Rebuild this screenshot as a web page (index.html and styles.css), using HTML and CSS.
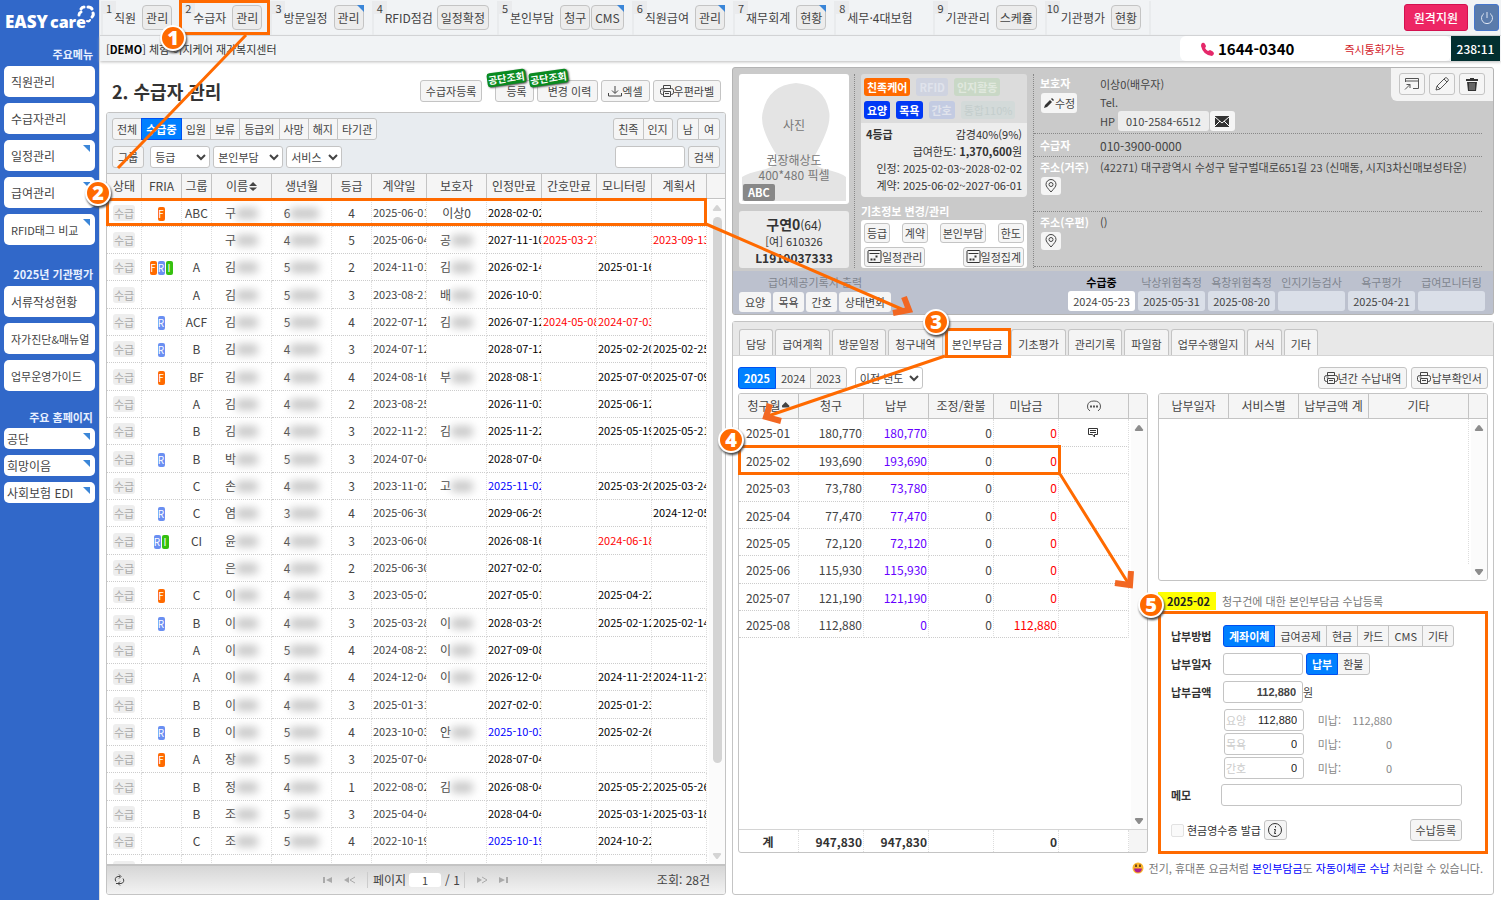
FILE: index.html
```html
<!DOCTYPE html>
<html lang="ko">

<head>
    <meta charset="UTF-8">
    <meta name="viewport" content="width=device-width, initial-scale=1.0">
    <title>EASYcare - 수급자 관리</title>
    <link rel="stylesheet" href="styles.css">
</head>

<body>
    <!-- shared icons -->
    <svg class="defs" aria-hidden="true">
        <symbol id="i-print" viewBox="0 0 14 14"><g fill="none" stroke="#444"><path d="M3.5 4.5v-3h7v3M3.5 10.5h-1a2 2 0 0 1-2-2v-2a2 2 0 0 1 2-2h9a2 2 0 0 1 2 2v2a2 2 0 0 1-2 2h-1"/><path d="M3.5 7.5h7v5h-7zM2.5 6h2M5 9.500h4"/></g></symbol>
        <symbol id="i-pin" viewBox="0 0 12 14"><g fill="none" stroke="#444"><path d="M6 13C3 9.500 1 7.500 1 5.500a5 5 0 0 1 10 0c0 2-2 4-5 7.500z"/><circle cx="6" cy="5.500" r="2"/></g></symbol>
        <symbol id="i-cal" viewBox="0 0 14 14"><g fill="none" stroke="#333"><rect x=".5" y=".5" width="13" height="12" rx="1"/><path d="M2 3.500h10"/><path d="M8 6.500h3M3 9.500h2M6 9.500h2" stroke-width="2" stroke-dasharray="2 1"/></g></symbol>
        <symbol id="i-tri" viewBox="0 0 10 8"><path d="M4 1.500q1-1 2 0l3 4q.7 1.500-1 1.500h-6q-1.700 0-1-1.500z" fill="currentColor"/></symbol>
    </svg>

    <div class="app">
        <aside class="sidebar">
            <a class="logo" href="#" aria-label="EASYcare">
                <svg width="92" height="32" viewBox="0 0 92 32">
                    <text x="1" y="28" class="logo-text" font-size="17">EASY</text>
                    <text x="46" y="28" class="logo-text" font-size="16">care</text>
                    <g fill="none" stroke="#fff" stroke-width="3" stroke-linecap="round">
                        <path d="M75 15q0-2 2-3"/><path d="M77 9q1-2 3-2"/><path d="M84 7q3 0 4 2"/>
                        <path d="M89 13q1 2-1 4"/><path d="M86 20q-1 2-3 1" stroke-width="2"/>
                    </g>
                </svg>
            </a>
            <h2>주요메뉴</h2>
            <a class="menu" href="#">직원관리</a>
            <a class="menu" href="#">수급자관리</a>
            <a class="menu corner" href="#">일정관리</a>
            <a class="menu corner" href="#">급여관리</a>
            <a class="menu tight corner" href="#">RFID태그 비교</a>
            <h2 class="second">2025년 기관평가</h2>
            <a class="menu" href="#">서류작성현황</a>
            <a class="menu tight" href="#">자가진단&amp;매뉴얼</a>
            <a class="menu tight" href="#">업무운영가이드</a>
            <h2 class="third">주요 홈페이지</h2>
            <a class="menu small corner" href="#">공단</a>
            <a class="menu small corner" href="#">희망이음</a>
            <a class="menu small corner" href="#">사회보험 EDI</a>
        </aside>

        <div class="page">
            <nav class="topnav">
                <div class="nav-item"><i>1</i><a href="#">직원</a><button>관리</button></div>
                <div class="nav-item"><i>2</i><a href="#">수급자</a><button>관리</button></div>
                <div class="nav-item"><i>3</i><a href="#">방문일정</a><button class="corner">관리</button></div>
                <div class="nav-item near"><i>4</i><a href="#">RFID점검</a><button>일정확정</button></div>
                <div class="nav-item"><i>5</i><a href="#">본인부담</a><div class="pair"><button>청구</button><button class="corner">CMS</button></div></div>
                <div class="nav-item"><i>6</i><a href="#">직원급여</a><button class="corner">관리</button></div>
                <div class="nav-item"><i>7</i><a href="#">재무회계</a><button class="corner">현황</button></div>
                <div class="nav-item wide"><i>8</i><a href="#">세무·4대보험</a></div>
                <div class="nav-item"><i>9</i><a href="#">기관관리</a><button>스케쥴</button></div>
                <div class="nav-item two-digit"><i>10</i><a href="#">기관평가</a><button>현황</button></div>
                <button class="remote">원격지원</button>
                <button class="power" aria-label="로그아웃">
                    <svg width="14" height="14" viewBox="0 0 14 14" fill="none" stroke="#dfe6f2"><path d="M7 1v6M4 2.500a5.500 5.500 0 1 0 6 0"/></svg>
                </button>
            </nav>
            <div class="infobar">
                <span>[<b>DEMO</b>] 체험 이지케어 재가복지센터</span>
                <div class="hotline">
                    <svg width="14" height="14" viewBox="0 0 14 14"><path d="M1 1q2-1 3 1l1 2q0 1-1 2 1 2 3 3l2-1q3 1 4 3 0 2-2 3Q2 13 0 4 0 2 1 1z" fill="#e5286a"/></svg>
                    <b>1644-0340</b>
                    <span>즉시통화가능</span>
                </div>
                <div class="timer">238:11</div>
            </div>

            <main>
                <section class="list">
                    <header>
                        <h1>2. 수급자 관리</h1>
                        <button class="btn reg">수급자등록</button>
                        <div class="tagged"><em>공단조회</em><button class="btn">등록</button></div>
                        <div class="tagged"><em>공단조회</em><button class="btn">변경 이력</button></div>
                        <button class="btn"><svg width="14" height="12" viewBox="0 0 14 12" fill="none" stroke="#444"><path d="M7 1v7M4 5.500l3 3 3-3M.5 8v3h13V8"/></svg>엑셀</button>
                        <button class="btn"><svg width="14" height="14"><use href="#i-print"/></svg>우편라벨</button>
                    </header>
                    <div class="box client-box">
                        <div class="toolbar">
                            <div class="line">
                                <div class="group">
                                    <button class="btn">전체</button><button class="btn on">수급중</button><button class="btn">입원</button><button class="btn">보류</button><button class="btn">등급외</button><button class="btn">사망</button><button class="btn">해지</button><button class="btn">타기관</button>
                                </div>
                                <div class="group push"><button class="btn">친족</button><button class="btn">인지</button></div>
                                <div class="group sex"><button class="btn">남</button><button class="btn">여</button></div>
                            </div>
                            <div class="line">
                                <button class="btn group-btn">그룹</button>
                                <select class="s-grade" aria-label="등급"><option>등급</option></select>
                                <select class="s-pay" aria-label="본인부담"><option>본인부담</option></select>
                                <select class="s-svc" aria-label="서비스"><option>서비스</option></select>
                                <input class="field push search" type="text" aria-label="검색어">
                                <button class="btn">검색</button>
                            </div>
                        </div>
                        <div class="scroll">
                            <table class="grid clients">
                                <colgroup>
                                    <col class="w35"><col class="w40"><col class="w30"><col class="w60"><col class="w60"><col class="w40"><col class="w55"><col class="w60"><col class="w55"><col class="w55"><col class="w55"><col class="w55"><col>
                                </colgroup>
                                <thead>
                                    <tr><th>상태</th><th>FRIA</th><th>그룹</th><th>이름<span class="sort"></span></th><th>생년월</th><th>등급</th><th>계약일</th><th>보호자</th><th>인정만료</th><th>간호만료</th><th>모니터링</th><th>계획서</th><th></th></tr>
                                </thead>
                                <tbody id="clients"></tbody>
                            </table>
                            <div class="bar light"><svg width="10" height="8"><use href="#i-tri"/></svg><span class="thumb"></span><svg class="down" width="10" height="8"><use href="#i-tri"/></svg></div>
                        </div>
                        <footer>
                            <svg width="11" height="12" viewBox="0 0 11 12" fill="none" stroke="#444"><path d="M6 2.500H4a3 3 0 0 0-2 5M2 9.500h3M5 .5l2 2-2 2M5 9.500h2a3 3 0 0 0 2-5M6 7.500l-2 2 2 2"/></svg>
                            <div class="pager">
                                <svg width="10" height="8" viewBox="0 0 10 8" fill="#aaa"><path d="M0 1h2v6H0zM9 1v6L3 4z"/></svg>
                                <svg width="12" height="8" viewBox="0 0 12 8" fill="#aaa"><path d="M5 1v6L0 4z"/><path d="M11 1L6 4l5 3" fill="none" stroke="#aaa"/></svg>
                                <label for="pageno">페이지</label>
                                <input id="pageno" type="text" value="1">
                                <span class="total">/ 1</span>
                                <svg width="12" height="8" viewBox="0 0 12 8" fill="#aaa"><path d="M1 1v6l5-3z"/><path d="M6 1l5 3-5 3" fill="none" stroke="#aaa"/></svg>
                                <svg width="10" height="8" viewBox="0 0 10 8" fill="#aaa"><path d="M7 1h2v6H7zM0 1v6l6-3z"/></svg>
                            </div>
                            <span class="count">조회: 28건</span>
                        </footer>
                    </div>
                </section>

                <div class="right">
                    <section class="detail">
                        <div class="detail-top">
                            <div class="who">
                                <div class="photo">
                                    <svg viewBox="0 0 104 124" width="104" height="124"><path d="M0 124V100q5-4 24-8 13-4 12-12-8-12-12-22-6-14-3-24Q27 8 54 6q28 2 33 28 2 10-4 24-4 10-11 22-2 8 10 12 18 4 22 8v24z" fill="#e4e4e4"/></svg>
                                    <span>사진</span>
                                    <p>권장해상도<br>400*480 픽셀</p>
                                    <b>ABC</b>
                                </div>
                                <div class="name">
                                    <p><strong>구연0</strong>(64)</p>
                                    <p class="id">[여] 610326</p>
                                    <p><b>L1910037333</b></p>
                                </div>
                            </div>
                            <div class="grade">
                                <div class="chips">
                                    <span class="chip orange">친족케어</span><span class="chip pale">RFID</span><span class="chip green">인지활동</span>
                                    <span class="chip blue">요양</span><span class="chip blue">목욕</span><span class="chip pale2">간호</span><span class="chip pale3">통합110%</span>
                                </div>
                                <div class="limits">
                                    <p class="split"><b>4등급</b><span>감경40%(9%)</span></p>
                                    <p>급여한도: <b>1,370,600</b>원</p>
                                    <p>인정: 2025-02-03~2028-02-02</p>
                                    <p>계약: 2025-06-02~2027-06-01</p>
                                </div>
                                <h3>기초정보 변경/관리</h3>
                                <div class="basic">
                                    <button class="btn">등급</button><button class="btn">계약</button><button class="btn">본인부담</button><button class="btn">한도</button>
                                    <button class="btn"><svg width="15" height="14"><use href="#i-cal"/></svg>일정관리</button><button class="btn"><svg width="15" height="14"><use href="#i-cal"/></svg>일정집계</button>
                                </div>
                            </div>
                            <div class="contact">
                                <div class="tools">
                                    <button class="btn" aria-label="새 창"><svg width="16" height="14" viewBox="0 0 16 14" fill="none" stroke="#555"><path d="M1.500 5V1.500h13v10H9M1.500 4h13M1 12.500l5-5M2.500 7.500H6V11"/></svg></button>
                                    <button class="btn" aria-label="수정"><svg width="16" height="16" viewBox="0 0 16 16" fill="none" stroke="#555"><path d="M2 14l1-4 8-8q1-1 2.500.5T14 5l-8 8zM3 10l3 3M10 3l3 3"/></svg></button>
                                    <button class="btn" aria-label="삭제"><svg width="14" height="15" viewBox="0 0 14 15"><path d="M1 2h4V1h4v1h4v2H1zM2 5h10l-1 9H3z" fill="#333"/><path d="M5 6v7M7 6v7M9 6v7" stroke="#999"/></svg></button>
                                </div>
                                <div class="row guardian">
                                    <div><strong>보호자</strong><button class="flat"><svg width="12" height="12" viewBox="0 0 12 12"><path d="M1 11l1-3 5-5 2 2-5 5zM8 2l1-1 2 2-1 1z" fill="#333"/></svg>수정</button></div>
                                    <div class="lines"><p>이상0(배우자)</p><p>Tel.</p><p class="hp">HP <span>010-2584-6512</span><button class="flat mail" aria-label="문자"><svg width="14" height="11" viewBox="0 0 14 11"><path d="M0 0h14v11H0z" fill="#333"/><path d="M0 1l7 6 7-6M0 10l5-5M14 10L9 5" fill="none" stroke="#fff"/></svg></button></p></div>
                                </div>
                                <div class="row self"><strong>수급자</strong><p>010-3900-0000</p></div>
                                <div class="row addr"><div><strong>주소(거주)</strong><button class="flat pin" aria-label="지도"><svg width="12" height="14"><use href="#i-pin"/></svg></button></div><p>(42271) 대구광역시 수성구 달구벌대로651길 23 (신매동, 시지3차신매보성타운)</p></div>
                                <div class="row addr"><div><strong>주소(우편)</strong><button class="flat pin" aria-label="지도"><svg width="12" height="14"><use href="#i-pin"/></svg></button></div><p>()</p></div>
                            </div>
                        </div>
                        <div class="strip">
                            <div class="record">
                                <p>급여제공기록지 출력</p>
                                <button class="flat">요양</button><button class="flat">목욕</button><button class="flat">간호</button><button class="flat">상태변화</button>
                            </div>
                            <div class="dates">
                                <div class="now"><p>수급중</p><span>2024-05-23</span></div>
                                <div><p>낙상위험측정</p><span>2025-05-31</span></div>
                                <div><p>욕창위험측정</p><span>2025-08-20</span></div>
                                <div><p>인지기능검사</p><span></span></div>
                                <div><p>욕구평가</p><span>2025-04-21</span></div>
                                <div><p>급여모니터링</p><span></span></div>
                            </div>
                        </div>
                    </section>

                    <section class="work">
                        <div class="tabs">
                            <button>담당</button><button>급여계획</button><button>방문일정</button><button>청구내역</button><button class="on">본인부담금</button><button>기초평가</button><button>관리기록</button><button>파일함</button><button>업무수행일지</button><button>서식</button><button>기타</button>
                        </div>
                        <div class="work-bar">
                            <div class="group years"><button class="btn on">2025</button><button class="btn">2024</button><button class="btn">2023</button></div>
                            <select class="s-year" aria-label="이전 년도"><option>이전 년도</option></select>
                            <button class="btn push"><svg width="14" height="14"><use href="#i-print"/></svg>년간 수납내역</button>
                            <button class="btn"><svg width="14" height="14"><use href="#i-print"/></svg>납부확인서</button>
                        </div>
                        <div class="work-body">
                            <div class="box bill-box">
                                <table class="grid bills">
                                    <colgroup><col class="w60"><col class="w65"><col class="w65"><col class="w65"><col class="w65"><col class="w70"><col></colgroup>
                                    <thead>
                                        <tr><th>청구월<span class="sort up"></span></th><th>청구</th><th>납부</th><th>조정/환불</th><th>미납금</th><th><svg width="16" height="12" viewBox="0 0 16 12" fill="none" stroke="#555"><path d="M4 11Q1 9 1.500 6 2 1 8 1t6.500 5q.5 3-2.500 5"/><path d="M4 6.500h8" stroke-width="2" stroke-dasharray="2 1"/></svg></th><th></th></tr>
                                    </thead>
                                    <tbody id="bills"></tbody>
                                </table>
                                <div class="bar"><svg width="10" height="8"><use href="#i-tri"/></svg><svg class="down" width="10" height="8"><use href="#i-tri"/></svg></div>
                                <table class="grid bills sum">
                                    <colgroup><col class="w60"><col class="w65"><col class="w65"><col class="w65"><col class="w65"><col class="w70"><col></colgroup>
                                    <tr><td>계</td><td>947,830</td><td>947,830</td><td></td><td>0</td><td></td><td></td></tr>
                                </table>
                            </div>
                            <div class="pay">
                                <div class="box pay-box">
                                    <table class="grid pays">
                                        <colgroup><col class="w70"><col class="w70"><col class="w70"><col class="w100"><col></colgroup>
                                        <thead><tr><th>납부일자</th><th>서비스별</th><th>납부금액 계</th><th>기타</th><th></th></tr></thead>
                                        <tbody><tr><td></td><td></td><td></td><td></td><td></td></tr></tbody>
                                    </table>
                                    <div class="bar"><svg width="10" height="8"><use href="#i-tri"/></svg><svg class="down" width="10" height="8"><use href="#i-tri"/></svg></div>
                                </div>
                                <p class="caption"><mark>2025-02</mark>청구건에 대한 본인부담금 수납등록</p>
                                <form class="pay-form">
                                    <div class="f-row"><b>납부방법</b><div class="group"><button type="button" class="btn on">계좌이체</button><button type="button" class="btn">급여공제</button><button type="button" class="btn">현금</button><button type="button" class="btn">카드</button><button type="button" class="btn">CMS</button><button type="button" class="btn">기타</button></div></div>
                                    <div class="f-row"><label for="paydate">납부일자</label><input class="field" id="paydate" type="text"><div class="group"><button type="button" class="btn on">납부</button><button type="button" class="btn">환불</button></div></div>
                                    <div class="f-row"><label for="amount">납부금액</label><input class="field num" id="amount" type="text" value="112,880"><span>원</span></div>
                                    <div class="parts">
                                        <div><div class="field"><label for="p1">요양</label><input id="p1" type="text" value="112,880"></div><span>미납:</span><span>112,880</span></div>
                                        <div><div class="field"><label for="p2">목욕</label><input id="p2" type="text" value="0"></div><span>미납:</span><span>0</span></div>
                                        <div><div class="field"><label for="p3">간호</label><input id="p3" type="text" value="0"></div><span>미납:</span><span>0</span></div>
                                    </div>
                                    <div class="f-row memo"><label for="memo">메모</label><input class="field" id="memo" type="text"></div>
                                    <div class="f-row last"><input type="checkbox" id="receipt"><label for="receipt">현금영수증 발급</label><button type="button" class="btn info" aria-label="안내"><svg width="16" height="16" viewBox="0 0 16 16" fill="none" stroke="#333"><circle cx="8" cy="8" r="6.500"/><path d="M8.500 4v1.500M7 7.500h1.500L7.500 11.500H9"/></svg></button><button type="button" class="btn push">수납등록</button></div>
                                </form>
                            </div>
                        </div>
                        <p class="note"><svg width="12" height="12" viewBox="0 0 12 12"><circle cx="6" cy="6" r="5.500" fill="#fbb52c"/><path d="M2 6.500h8q-.5 4-4 4t-4-4z" fill="#b0208c"/><path d="M4 2.500v2.500M8 2.500v2.500" stroke="#4a2a10" stroke-width="1.500"/></svg>전기, 휴대폰 요금처럼 <a href="#">본인부담금</a>도 <a href="#">자동이체로 수납</a> 처리할 수 있습니다.</p>
                    </section>
                </div>
            </main>
        </div>
    </div>

    <!-- step guide drawn over the page -->
    <svg class="guide" width="1500" height="900" viewBox="0 0 1500 900">
        <g fill="none" stroke="#ff6a00" stroke-width="3">
            <path d="M246 35L118 168M706 224L906 311M945 356L768 416M1060 474L1130 586"/>
            <rect x="180.500" y="1.500" width="88" height="32"/>
            <rect x="107.500" y="199.500" width="598" height="25"/>
            <rect x="739.500" y="446.500" width="320" height="27"/>
            <rect x="946.500" y="329.500" width="63" height="27"/>
            <rect x="1159.500" y="612.500" width="327" height="240"/>
        </g>
        <g fill="none" stroke="#f26722" stroke-width="6">
            <path d="M904 297l5 13-16 3M770 404l-4 13 15 4M1131 571l-1 14-15-2"/>
        </g>
        <g class="steps">
            <g transform="translate(173 38)"><circle r="12"/><text y="7">1</text></g>
            <g transform="translate(98 193)"><circle r="12"/><text y="7">2</text></g>
            <g transform="translate(936 322)"><circle r="12"/><text y="7">3</text></g>
            <g transform="translate(731 440)"><circle r="12"/><text y="7">4</text></g>
            <g transform="translate(1151 605)"><circle r="12"/><text y="7">5</text></g>
        </g>
    </svg>

    <script src="script.js"></script>
</body>

</html>
```
FILE: styles.css
```css
* {
    box-sizing: border-box;
}

body {
    margin: 0;
    font-family: "Noto Sans CJK KR", sans-serif;
    font-size: 11px;
    line-height: 16px;
    color: #444;
    background: #fff;
}

h1, h2, h3, p {
    margin: 0;
}

a {
    color: inherit;
    text-decoration: none;
}

button, input, select {
    font: inherit;
    color: inherit;
    margin: 0;
}

button {
    display: flex;
    align-items: center;
    justify-content: center;
    white-space: nowrap;
}

.defs {
    position: absolute;
    width: 0;
    height: 0;
}

.app {
    display: flex;
    height: 100vh;
}

.push {
    margin-left: auto;
}

/* sidebar */
.sidebar {
    width: 99px;
    flex: none;
    padding: 0 4px;
    background: #3168c9;
}

.logo {
    display: block;
    height: 46px;
}

.logo-text {
    font-family: "Open Sans", sans-serif;
    font-weight: 800;
    fill: #fff;
}

.sidebar h2 {
    margin-bottom: 4px;
    padding-right: 2px;
    text-align: right;
    font-size: 11px;
    line-height: 16px;
    color: #e8f0ff;
}

.sidebar h2.second {
    margin-top: 21px;
}

.sidebar h2.third {
    margin-top: 18px;
    margin-bottom: 3px;
}

.menu {
    position: relative;
    display: block;
    height: 31px;
    margin-bottom: 6px;
    padding-left: 7px;
    line-height: 32px;
    font-size: 12px;
    white-space: nowrap;
    background: #fff;
    border-radius: 5px;
}

.menu.tight {
    font-size: 11px;
}

.menu.small {
    height: 21px;
    padding-left: 3px;
    line-height: 22px;
}

.corner::after {
    content: "";
    position: absolute;
    top: 5px;
    right: 5px;
    border-top: 7px solid #3b86d8;
    border-left: 7px solid transparent;
}

/* top bars */
.page {
    flex: 1;
    min-width: 0;
    display: flex;
    flex-direction: column;
    border-left: 1px solid #ddd;
}

.topnav {
    display: flex;
    align-items: center;
    height: 36px;
    padding: 0 2px 0 1px;
    font-size: 12px;
    background: #f1f3f5;
    border-bottom: 1px solid #d6d8da;
}

.nav-item {
    position: relative;
    display: flex;
    align-items: center;
    gap: 6px;
    height: 34px;
    padding: 0 8px 0 11px;
    border-left: 2px solid #e9ebed;
    white-space: nowrap;
}

.nav-item:last-of-type {
    border-right: 2px solid #e9ebed;
}

.nav-item.near {
    gap: 4px;
}

.nav-item.wide {
    padding-right: 20px;
}

.nav-item.two-digit {
    padding-left: 14px;
}

.nav-item i {
    position: absolute;
    left: 0;
    top: 0;
    min-width: 13px;
    height: 13px;
    padding-left: 3px;
    font-size: 11px;
    line-height: 14px;
    font-style: normal;
    background: #eaebed;
}

.nav-item.two-digit i {
    padding-left: 0;
}

.nav-item .pair {
    display: flex;
    gap: 1px;
}

.nav-item button {
    position: relative;
    height: 25px;
    padding: 0 3px;
    background: #ececec;
    border: 1px solid #c4c4c4;
    border-radius: 4px;
}

.nav-item .corner::after {
    top: -1px;
    right: -1px;
}

.remote {
    height: 27px;
    margin-left: auto;
    padding: 0 9px;
    color: #fff;
    font-weight: 500;
    background: #ed2664;
    border: 1px solid #d3114f;
    border-radius: 3px;
}

.power {
    width: 25px;
    height: 27px;
    margin-left: 6px;
    padding: 0;
    background: #5a7bab;
    border: 1px solid #4676cc;
    border-radius: 3px;
}

.infobar {
    display: flex;
    align-items: center;
    height: 25px;
    padding-left: 6px;
    background: #f1f3f5;
    box-shadow: 0 1px 3px #bbb;
    color: #333;
}

.infobar b {
    color: #000;
}

.hotline {
    display: flex;
    align-items: center;
    width: 271px;
    height: 25px;
    margin-left: auto;
    padding-left: 21px;
    background: #fff;
    border-radius: 6px;
}

.hotline b {
    margin-left: 3px;
    font-size: 15px;
}

.hotline span {
    margin-left: 50px;
    color: #d3222a;
}

.timer {
    width: 49px;
    margin-right: 1px;
    line-height: 25px;
    text-align: center;
    font-size: 12px;
    font-weight: 500;
    color: #fff;
    background: #022f30;
}

main {
    flex: 1;
    min-height: 0;
    display: flex;
    gap: 6px;
    padding: 6px 7px 5px 6px;
}

/* common controls */
.btn {
    height: 22px;
    padding: 0 5px;
    background: #f5f5f5;
    border: 1px solid #c4c4c4;
    border-radius: 3px;
}

.btn.on {
    color: #fff;
    font-weight: 700;
    background: #0080ff;
    border-color: #0050f0;
}

.group {
    display: flex;
}

.group .btn {
    padding: 0 4px;
    margin-left: -1px;
    border-radius: 0;
}

.group .btn:first-child {
    margin-left: 0;
    border-radius: 3px 0 0 3px;
}

.group .btn:last-child {
    border-radius: 0 3px 3px 0;
}

.group .btn.on {
    position: relative;
}

.flat {
    height: 20px;
    padding: 0 6px;
    background: #f5f5f5;
    border: 0;
    border-radius: 3px;
}

.field,
select {
    height: 22px;
    background: #fff;
    border: 1px solid #c4c4c4;
    border-radius: 3px;
}

.box {
    position: relative;
    display: flex;
    flex-direction: column;
    border: 1px solid #c4c4c4;
    border-radius: 3px;
    overflow: hidden;
}

/* grids */
.grid {
    width: 100%;
    table-layout: fixed;
    border-spacing: 0;
}

.w30 { width: 30px; }
.w35 { width: 35px; }
.w40 { width: 40px; }
.w55 { width: 55px; }
.w60 { width: 60px; }
.w65 { width: 65px; }
.w70 { width: 70px; }
.w100 { width: 100px; }

.grid th {
    height: 25px;
    padding: 0;
    font-size: 12px;
    font-weight: 400;
    white-space: nowrap;
    background: #f5f5f5;
    border-right: 1px solid #c4c4c4;
    border-bottom: 1px solid #c4c4c4;
}

.grid th:last-child {
    border-right: 0;
}

.grid th svg {
    display: block;
    margin: auto;
}

.grid td {
    height: 27px;
    padding: 0;
    font-size: 12px;
    text-align: center;
    white-space: nowrap;
    overflow: hidden;
    border-right: 1px dotted #ddd;
    border-bottom: 1px dotted #ccc;
}

.grid td:last-child {
    border: 0;
}

.sort {
    display: inline-block;
    width: 8px;
    height: 9px;
    margin-left: 1px;
    background: #444;
    clip-path: polygon(50% 0, 100% 45%, 0 45%, 0 60%, 100% 60%, 50% 100%, 0 60%, 0 45%);
}

.sort.up {
    clip-path: polygon(50% 0, 100% 45%, 90% 60%, 10% 60%, 0 45%);
}

.bar {
    position: absolute;
    top: 26px;
    right: 0;
    bottom: 0;
    width: 16px;
    display: flex;
    flex-direction: column;
    align-items: center;
    padding: 4px 0;
    color: #8c8c8c;
    background: #fbfbfb;
}

.bar .down {
    margin-top: auto;
    transform: rotate(180deg);
}

.bar .thumb {
    width: 9px;
    height: 546px;
    margin-top: 5px;
    background: #d4d4d4;
    border-radius: 5px;
}

.bar.light {
    color: #d4d4d4;
}

/* client list */
.list {
    width: 620px;
    flex: none;
    display: flex;
    flex-direction: column;
}

.list header {
    display: flex;
    align-items: center;
    gap: 3px;
    height: 45px;
    padding: 2px 5px 0 6px;
}

.list header .btn {
    padding: 0 6px;
}

.list h1 {
    margin-right: auto;
    font-size: 18px;
    line-height: 26px;
    color: #333;
}

.list header .reg {
    margin-right: 10px;
    padding: 0 5px;
}

.tagged {
    position: relative;
}

.list .tagged .btn {
    padding: 0 6px 0 10px;
}

.tagged em {
    position: absolute;
    left: -8px;
    top: -9px;
    padding: 0 1px;
    font-size: 10px;
    font-style: normal;
    font-weight: 700;
    line-height: 14px;
    white-space: nowrap;
    color: #fff;
    background: #0a8a20;
    border-radius: 3px;
    box-shadow: 1px 1px 2px #555;
    transform: rotate(-8deg);
}

.client-box {
    flex: 1;
    min-height: 0;
}

.toolbar {
    padding: 5px;
    background: #e8ecf0;
    border-bottom: 1px solid #c4c4c4;
}

.line {
    display: flex;
}

.line + .line {
    gap: 3px;
    margin-top: 6px;
}

.line .sex {
    margin-left: 4px;
}

.line .sex .btn,
.work-bar .years .btn {
    padding: 0 5px;
}

.line .group-btn {
    margin-right: 3px;
    padding: 0 5px;
}

.s-grade { width: 60px; }
.s-pay { width: 70px; }
.s-svc { width: 56px; }
.s-year { width: 68px; }

.search {
    width: 70px;
}

.scroll {
    position: relative;
    flex: 1;
    min-height: 0;
    overflow: hidden;
}

.clients tr:nth-child(3n + 1) td {
    height: 28px;
}

.clients .date {
    padding: 0 0 2px 1px;
    font-size: 11px;
    line-height: 14px;
    text-align: left;
    text-overflow: clip;
}

.clients .due {
    color: #000;
}

.clients .red {
    color: #f00;
}

.clients .blue {
    color: #00f;
}

.state {
    padding: 0 1px;
    font-size: 11px;
    color: #aaa;
    background: #eee;
    border-radius: 3px;
}

.fria {
    display: inline-block;
    width: 7px;
    margin-right: 1px;
    font-size: 10px;
    line-height: 14px;
    color: #fff;
    border-radius: 2px;
}

.fria.F { background: #ff6a00; }
.fria.R { background: #6a8ff2; }
.fria.I { background: #35c010; }

.mask {
    display: inline-block;
    height: 11px;
    width: 22px;
    background: #c8c8c8;
    border-radius: 4px;
    vertical-align: -1px;
    filter: blur(4px);
}

.mask.long {
    width: 29px;
}

.client-box footer {
    display: flex;
    align-items: center;
    height: 30px;
    padding: 0 15px 0 7px;
    font-size: 12px;
    background: linear-gradient(#d6d6d6, #f3f3f3);
    border-top: 2px solid #c4c4c4;
}

.pager {
    display: flex;
    align-items: center;
    gap: 11px;
    margin: 0 auto;
    padding-left: 50px;
}

.pager label {
    margin-right: -8px;
    padding-left: 5px;
    border-left: 1px solid #ccc;
}

.pager input {
    width: 32px;
    height: 14px;
    padding: 0;
    text-align: center;
    font-size: 11px;
    border: 0;
    border-radius: 3px;
}

.pager .total {
    margin-left: -7px;
    padding-right: 4px;
    border-right: 1px solid #ccc;
}

.count {
    font-size: 12px;
}

/* client detail */
.right {
    flex: 1;
    min-width: 0;
    display: flex;
    flex-direction: column;
    gap: 6px;
}

.detail {
    background: #cacaca;
    border: 1px solid #b4b4b4;
    border-radius: 3px;
    overflow: hidden;
}

.detail-top {
    display: flex;
    height: 203px;
}

.who {
    width: 122px;
    margin: 6px 0 3px;
    padding: 0 5px 0 6px;
    border-right: 1px dotted #888;
}

.photo {
    position: relative;
    width: 110px;
    height: 130px;
    padding: 3px;
    text-align: center;
    font-size: 12px;
    color: #777;
    background: #fff;
    border-radius: 3px;
}

.photo svg {
    display: block;
}

.photo span,
.photo p,
.photo b {
    position: absolute;
    left: 0;
    right: 0;
    top: 43px;
    line-height: 15px;
}

.photo p {
    top: 78px;
}

.photo b {
    left: 4px;
    right: auto;
    top: 110px;
    padding: 0 5px;
    line-height: 17px;
    font-size: 11px;
    color: #fff;
    background: #888;
    border-radius: 2px;
}

.name {
    width: 110px;
    height: 57px;
    margin-top: 7px;
    padding-top: 5px;
    text-align: center;
    font-size: 12px;
    line-height: 17px;
    color: #333;
    background: #ebebeb;
    border-radius: 3px;
}

.name strong {
    font-size: 14px;
}

.name .id {
    font-size: 11px;
    line-height: 16px;
}

.grade {
    width: 179px;
    margin: 6px 0 3px;
    padding: 0 6px;
    border-right: 1px dotted #888;
}

.chips {
    display: flex;
    flex-wrap: wrap;
    gap: 5px 6px;
    height: 49px;
    padding: 4px 3px;
    background: #dcdcdc;
    border-radius: 3px 3px 0 0;
}

.chip {
    height: 18px;
    padding: 0 3px;
    line-height: 18px;
    font-weight: 700;
    color: #fff;
    border-radius: 3px;
}

.chip.orange { background: #ff6a00; }
.chip.blue { background: #0038f5; }
.chip.pale { background: #cfd3e0; color: #e0e3ec; }
.chip.green { background: #c9d8c6; color: #e0e8de; margin-right: 10px; }
.chip.pale2 { background: #c3cbe2; color: #e0e3ec; }
.chip.pale3 { background: #d3dad9; color: #c4cecd; font-weight: 400; }

.limits {
    height: 74px;
    padding: 3px 5px;
    line-height: 17px;
    text-align: right;
    background: #ededed;
    border-radius: 0 0 4px 4px;
    color: #333;
}

.split {
    display: flex;
    justify-content: space-between;
}

.grade h3 {
    margin: 6px 0 1px;
    font-size: 11px;
    line-height: 16px;
    color: #fff;
}

.basic {
    display: flex;
    flex-wrap: wrap;
    justify-content: space-between;
    gap: 4px 0;
    height: 48px;
    padding: 3px;
    background: #fff;
    border-radius: 3px;
}

.basic .btn {
    height: 20px;
    padding: 0 2px;
}

.contact {
    position: relative;
    flex: 1;
    padding: 6px 11px 0 0;
}

.tools {
    position: absolute;
    top: 0;
    right: 0;
    display: flex;
    gap: 4px;
    padding: 5px 8px 6px;
    background: #f3f3f3;
    border-radius: 0 0 0 6px;
}

.tools .btn {
    width: 26px;
    padding: 0;
}

.row {
    display: grid;
    grid-template-columns: 60px 1fr;
    padding-left: 6px;
    border-bottom: 1px dotted #888;
}

.row strong {
    display: block;
    color: #fff;
}

.row .flat {
    padding: 0 2px;
    margin: 2px 0 0 1px;
}

.row .pin {
    width: 20px;
    height: 18px;
}

.guardian {
    height: 60px;
    padding-top: 1px;
}

.lines p {
    line-height: 18px;
}

.hp {
    display: flex;
    align-items: center;
}

.hp span {
    margin-left: 3px;
    padding: 0 8px;
    line-height: 20px;
    background: #ededed;
    border-radius: 3px;
}

.row .mail {
    width: 25px;
    margin: 0 0 0 1px;
}

.self {
    height: 23px;
    padding-top: 3px;
}

.self p {
    padding-top: 1px;
    font-size: 12px;
}

.addr {
    height: 55px;
    padding-top: 2px;
}

.strip {
    display: flex;
    justify-content: space-between;
    height: 43px;
    padding: 3px 8px 2px 6px;
    background: #bcc1ce;
}

.strip p {
    line-height: 16px;
    text-align: center;
    color: #80858f;
}

.record {
    display: grid;
    grid-template-columns: 32px 31px 31px 52px;
    gap: 2px;
}

.record p {
    grid-column: 1 / 5;
}

.dates {
    display: flex;
    gap: 3px;
}

.dates div {
    width: 67px;
}

.dates span {
    display: block;
    height: 20px;
    margin-top: 1px;
    line-height: 20px;
    text-align: center;
    background: #dadfe8;
    border-radius: 3px;
}

.dates .now p {
    font-weight: 700;
    color: #000;
}

.dates .now span {
    background: #fff;
}

/* billing work area */
.work {
    flex: 1;
    min-height: 0;
    display: flex;
    flex-direction: column;
    border: 1px solid #c4c4c4;
    border-radius: 3px;
}

.tabs {
    display: flex;
    gap: 2px;
    height: 34px;
    padding: 7px 6px 0;
    background: #e8e8e8;
    border-bottom: 1px solid #d4d4d4;
}

.tabs button {
    padding: 3px 6px 0;
    background: #f4f4f4;
    border: 1px solid #c4c4c4;
    border-bottom: 0;
    border-radius: 3px 3px 0 0;
}

.tabs .on {
    background: #fff;
}

.work-bar {
    display: flex;
    gap: 4px;
    padding: 11px 5px 4px;
}

.work-bar .years {
    margin-right: 4px;
}

.work-body {
    display: grid;
    grid-template-columns: 41fr 33fr;
    gap: 10px;
    height: 460px;
    padding: 0 5px;
}

.bills td {
    padding: 1px 1px 0 0;
    text-align: right;
}

.bills tbody tr:nth-child(1) td,
.bills tbody tr:nth-child(3n) td {
    height: 28px;
}

.bills td:first-child {
    text-align: center;
}

.bills td:nth-child(3) {
    color: #60f;
}

.bills tbody td:nth-child(5) {
    color: #f00;
}

.bills td svg {
    display: block;
    margin: auto;
}

.bill-box .bar {
    bottom: 23px;
}

.bill-box .sum {
    margin-top: auto;
    border-top: 1px solid #d4d4d4;
}

.bills.sum tr:nth-child(1) td:nth-child(n) {
    height: 22px;
    font-weight: 700;
    color: #333;
    border-bottom: 0;
}

.sum td:last-child {
    background: #f5f5f5;
}

.pay {
    display: flex;
    flex-direction: column;
}

.pay-box {
    height: 188px;
}

.pays {
    height: 170px;
}

.grid.pays td {
    height: auto;
    border: 0;
}

.grid.pays td:nth-child(4) {
    border-right: 1px dotted #ddd;
}

.caption {
    display: flex;
    align-items: center;
    height: 18px;
    margin: 11px 0 0;
    color: #777;
}

.caption mark {
    width: 58px;
    margin-right: 6px;
    padding-right: 6px;
    line-height: 18px;
    text-align: right;
    font-weight: 700;
    color: #222;
    background: #ff0;
}

.pay-form {
    flex: 1;
    padding: 15px 26px 0 13px;
}

.f-row {
    display: grid;
    grid-template-columns: 52px auto 1fr;
    align-items: center;
    height: 22px;
    margin-bottom: 6px;
}

.f-row b,
.f-row > label {
    font-weight: 700;
    color: #333;
}

.pay-form .group .btn {
    padding: 0 5px;
}

.f-row .field {
    width: 80px;
}

.f-row .field + .group {
    margin-left: 3px;
}

.num {
    padding: 0 6px;
    text-align: right;
    font-family: "Liberation Sans", sans-serif;
    font-weight: 700;
}

.parts {
    display: grid;
    gap: 2px;
    margin-left: 53px;
    color: #888;
}

.parts > div {
    display: grid;
    grid-template-columns: 80px 37px 51px;
    align-items: center;
    text-align: right;
}

.parts .field {
    display: flex;
    align-items: center;
    padding: 0 6px 0 1px;
}

.parts label {
    color: #ccc;
}

.parts input {
    flex: 1;
    min-width: 0;
    padding: 0;
    border: 0;
    text-align: right;
    font-family: "Liberation Sans", sans-serif;
    color: #222;
}

.memo {
    grid-template-columns: 50px 1fr;
    margin: 5px 0 13px;
}

.memo .field {
    width: 100%;
}

.f-row.last {
    display: flex;
}

.f-row.last label {
    font-weight: 400;
}

.last input {
    appearance: none;
    width: 13px;
    height: 13px;
    margin-right: 3px;
    background: #fafafa;
    border: 1px solid #e2e2e2;
    border-radius: 2px;
}

.last .info {
    width: 23px;
    height: 20px;
    margin-left: 3px;
    padding: 0;
}

.note {
    display: flex;
    align-items: center;
    justify-content: flex-end;
    padding: 7px 10px 0 0;
    white-space: pre;
    color: #777;
}

.note svg {
    margin-right: 5px;
}

.note a {
    color: #00f;
}

/* step guide */
.guide {
    position: absolute;
    left: 0;
    top: 0;
    pointer-events: none;
}

.steps circle {
    fill: #ff6a00;
    stroke: #fff;
    stroke-width: 2;
    filter: drop-shadow(1px 2px 1px #444);
}

.steps text {
    font-family: "Open Sans", sans-serif;
    font-size: 20px;
    font-weight: 800;
    text-anchor: middle;
    fill: #fff;
}
```
FILE: script.js
```js
// fria, group, name, birth, grade, contract, guardian, due, nursing, monitoring, plan
// a trailing * hides the rest of the value, ! is overdue, ? is due soon
const clients = [
    ["F", "ABC", "구*", "6*", 4, "2025-06-01", "이상0", "2028-02-02", "", "", ""],
    ["", "", "구*", "4*", 5, "2025-06-04", "공*", "2027-11-10", "2025-03-27!", "", "2023-09-13!"],
    ["FRI", "A", "김*", "5*", 2, "2024-11-01", "김*", "2026-02-14", "", "2025-01-16", ""],
    ["", "A", "김*", "5*", 3, "2023-08-21", "배*", "2026-10-01", "", "", ""],
    ["R", "ACF", "김*", "5*", 4, "2022-07-12", "김*", "2026-07-12", "2024-05-08!", "2024-07-03!", ""],
    ["R", "B", "김*", "4*", 3, "2024-07-12", "", "2028-07-12", "", "2025-02-20", "2025-02-25"],
    ["F", "BF", "김*", "4*", 4, "2024-08-16", "부*", "2028-08-17", "", "2025-07-09", "2025-07-09"],
    ["", "A", "김*", "4*", 2, "2023-08-25", "", "2026-11-03", "", "2025-06-12", ""],
    ["", "B", "김*", "4*", 3, "2022-11-21", "김*", "2025-11-22", "", "2025-05-19", "2025-05-21"],
    ["R", "B", "박*", "5*", 3, "2024-07-04", "", "2028-07-04", "", "", ""],
    ["", "C", "손*", "4*", 3, "2023-11-02", "고*", "2025-11-02?", "", "2025-03-20", "2025-03-24"],
    ["R", "C", "염*", "3*", 4, "2025-06-30", "", "2029-06-29", "", "", "2024-12-05"],
    ["RI", "CI", "윤*", "4*", 3, "2023-06-08", "", "2026-08-16", "", "2024-06-18!", ""],
    ["", "", "은*", "4*", 2, "2025-06-30", "", "2027-02-02", "", "", ""],
    ["F", "C", "이*", "4*", 3, "2023-05-02", "", "2027-05-01", "", "2025-04-22", ""],
    ["R", "B", "이*", "4*", 3, "2025-03-28", "이*", "2028-03-29", "", "2025-02-12", "2025-02-14"],
    ["", "A", "이*", "5*", 4, "2024-08-23", "이*", "2027-09-08", "", "", ""],
    ["", "A", "이*", "4*", 4, "2024-12-04", "이*", "2026-12-04", "", "2024-11-25", "2024-11-27"],
    ["", "B", "이*", "4*", 3, "2025-01-31", "", "2027-02-01", "", "2025-01-23", ""],
    ["R", "B", "이*", "5*", 4, "2023-10-03", "안*", "2025-10-03?", "", "2025-02-26", ""],
    ["F", "A", "장*", "5*", 3, "2025-07-04", "", "2028-07-04", "", "", ""],
    ["", "B", "정*", "4*", 1, "2022-08-02", "김*", "2026-08-04", "", "2025-05-22", "2025-05-26"],
    ["", "B", "조*", "5*", 3, "2025-04-04", "", "2028-04-04", "", "2025-03-14", "2025-03-18"],
    ["", "C", "조*", "5*", 4, "2022-10-19", "", "2025-10-19?", "", "2024-10-22", ""],
    ["", "", "", "", "", "", "", "", "", "", ""]
]

const masked = (text, cls = "") => text.replace("*", `<span class="mask ${cls}"></span>`)

const due = (text) => {
    const color = text.endsWith("!") ? "red" : text.endsWith("?") ? "blue" : ""
    return `<td class="date due ${color}">${text.replace(/[!?]/, "")}</td>`
}

document.getElementById("clients").innerHTML = clients.map((c) => `<tr>
    <td><span class="state">수급</span></td>
    <td>${[...c[0]].map((f) => `<span class="fria ${f}">${f}</span>`).join("")}</td>
    <td>${c[1]}</td>
    <td>${masked(c[2])}</td>
    <td>${masked(c[3], "long")}</td>
    <td>${c[4]}</td>
    <td class="date">${c[5]}</td>
    <td>${masked(c[6])}</td>
    ${c.slice(7).map(due).join("")}
    <td></td>
</tr>`).join("")

// month, billed, paid, unpaid
const bills = [
    ["2025-01", "180,770", "180,770", "0"],
    ["2025-02", "193,690", "193,690", "0"],
    ["2025-03", "73,780", "73,780", "0"],
    ["2025-04", "77,470", "77,470", "0"],
    ["2025-05", "72,120", "72,120", "0"],
    ["2025-06", "115,930", "115,930", "0"],
    ["2025-07", "121,190", "121,190", "0"],
    ["2025-08", "112,880", "0", "112,880"]
]

const memoIcon = `<svg width="10" height="10" viewBox="0 0 10 10" fill="none" stroke="#333"><path d="M.5.5h9v6h-3v2.500l-2-2.500h-4zM2 2.500h6M2 4.500h6"/></svg>`

document.getElementById("bills").innerHTML = bills.map((b, i) => `<tr>
    <td>${b[0]}</td><td>${b[1]}</td><td>${b[2]}</td><td>0</td><td>${b[3]}</td><td>${i === 0 ? memoIcon : ""}</td><td></td>
</tr>`).join("")
```
